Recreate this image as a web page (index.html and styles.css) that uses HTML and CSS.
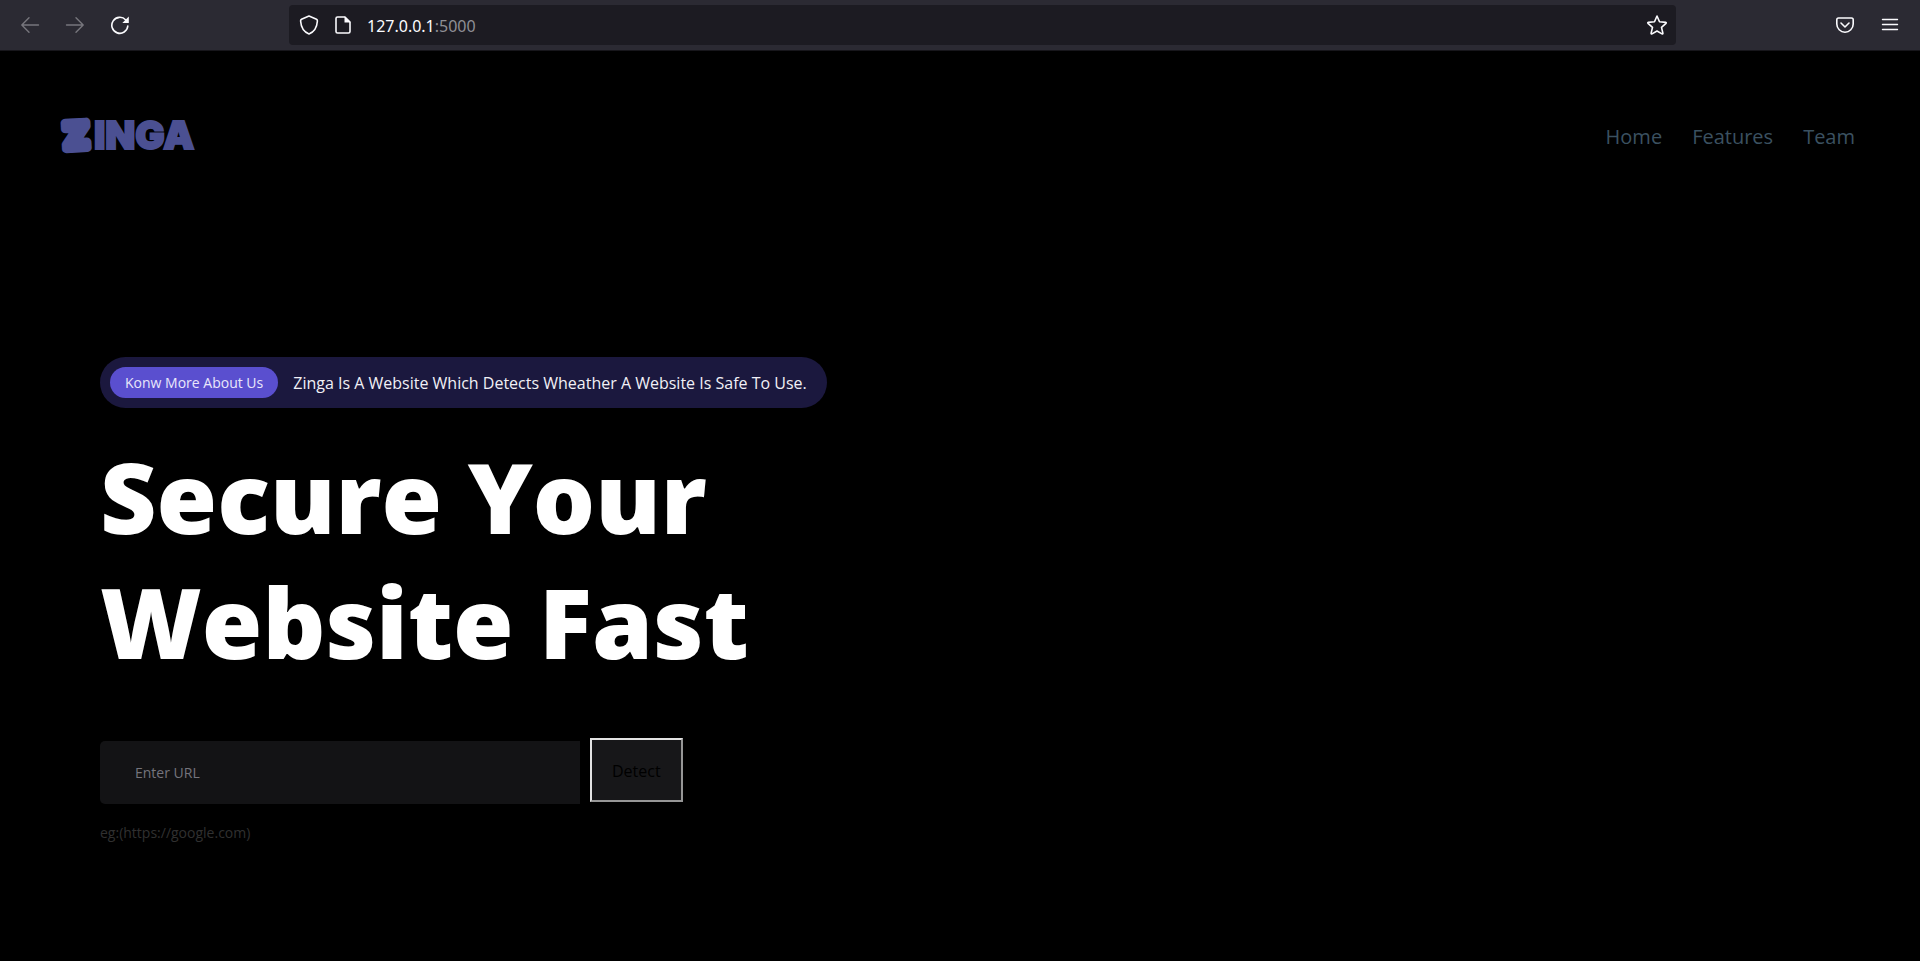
FILE: index.html
```html
<!DOCTYPE html>
<html lang="en">
<head>
<meta charset="utf-8">
<title>Zinga</title>
<link rel="stylesheet" href="styles.css">
</head>
<body>
<div class="toolbar">
  <div class="nav-buttons">
    <button class="tool dim" aria-label="Back"><svg viewBox="0 0 20 20"><path d="M18.5 10H2M9 2.800 1.800 10 9 17.200"/></svg></button>
    <button class="tool dim" aria-label="Forward"><svg viewBox="0 0 20 20"><path d="M1.500 10H18M11 2.800 18.200 10 11 17.200"/></svg></button>
    <button class="tool" aria-label="Reload"><svg viewBox="0 0 20 20"><path class="bold" d="M17.800 11A8 8 0 1 1 15.800 5"/><path class="fill" d="M18.800 1.500V8H12.300Z"/></svg></button>
  </div>
  <div class="address">
    <button class="tool" aria-label="Tracking protection"><svg viewBox="0 0 20 20"><path class="bold" d="M10 1 17.500 4.200Q18.500 4.700 18.400 6C18 12 15 17 10 19 5 17 2 12 1.600 6Q1.500 4.700 2.500 4.200Z"/></svg></button>
    <button class="tool" aria-label="Site information"><svg viewBox="0 0 20 20"><path class="bold" d="M4.500 2H12L17 7V16.500Q17 18 15.500 18H4.500Q3 18 3 16.500V3.500Q3 2 4.500 2Z"/><path class="fill" d="M11.500 1.500V7.500H17.500Z"/></svg></button>
    <span class="url"><span>127.0.0.1</span>:5000</span>
    <button class="tool" aria-label="Bookmark"><svg viewBox="0 0 20 20"><path class="bold" d="M10 1 12.500 6.800 18.900 7.400Q19.600 7.700 19 8.300L14.500 12.400 15.900 18.300Q15.800 19.300 15 18.900L10 16 5 18.900Q4.200 19.300 4.100 18.300L5.500 12.400 1 8.300Q.4 7.700 1.100 7.400L7.500 6.800Z"/></svg></button>
  </div>
  <div class="side-buttons">
    <button class="tool" aria-label="Pocket"><svg viewBox="0 0 20 20"><path class="bold" d="M3.500 3H16.500Q18.200 3 18.200 4.700V9A8.200 8.200 0 0 1 1.800 9V4.700Q1.800 3 3.500 3Z"/><path class="bold" d="M6 8 10 12 14 8"/></svg></button>
    <button class="tool" aria-label="Menu"><svg viewBox="0 0 20 20"><path d="M2.500 4.500H17.500M2.500 9.500H17.500M2.500 14.500H17.500"/></svg></button>
  </div>
</div>

<header class="header">
  <a class="logo" href="#" aria-label="Zinga">
    <svg viewBox="-5 -10 145 60"><text class="logo-z" x="4" y="31" transform="rotate(-3 17 18)">Z</text><text class="logo-rest" x="34" y="32">INGA</text></svg>
  </a>
  <nav class="menu">
    <a href="#">Home</a>
    <a href="#">Features</a>
    <a href="#">Team</a>
  </nav>
</header>

<main class="hero">
  <div class="notice">
    <a class="notice-link" href="#">Konw More About Us</a>
    <span class="notice-text">Zinga Is A Website Which Detects Wheather A Website Is Safe To Use.</span>
  </div>
  <h1>Secure Your<br>Website Fast</h1>
  <form class="detect">
    <input type="text" aria-label="URL" placeholder="Enter URL">
    <button type="button">Detect</button>
  </form>
  <p class="hint">eg:(https://google.com)</p>
</main>
</body>
</html>
```
FILE: styles.css
```css
* { box-sizing: border-box; }

body {
  margin: 0;
  min-height: 100vh;
  background: #000;
  color: #fff;
  font-family: "Open Sans", sans-serif;
}

a { text-decoration: none; }

.toolbar {
  display: flex;
  align-items: center;
  height: 51px;
  padding: 0 20px;
  background: #2b2a33;
  border-bottom: 1px solid #17161b;
}

.nav-buttons {
  display: flex;
  gap: 25px;
  width: 269px;
}

.side-buttons {
  display: flex;
  justify-content: flex-end;
  gap: 25px;
  width: 224px;
}

.tool {
  width: 20px;
  height: 20px;
  padding: 0;
  border: 0;
  background: none;
  color: #fbfbfe;
}

.tool svg {
  display: block;
  fill: none;
  stroke: currentColor;
  stroke-width: 1.4;
  stroke-linecap: round;
  stroke-linejoin: round;
}

.tool .bold { stroke-width: 1.6; }
.tool .fill { fill: currentColor; stroke: none; }
.tool.dim { color: #77767d; }

.address {
  display: flex;
  flex: 1;
  align-items: center;
  gap: 14px;
  height: 40px;
  padding: 0 9px 0 10px;
  border-radius: 4px;
  background: #1c1b22;
}

.url {
  flex: 1;
  padding-top: 2px;
  color: #8f8f95;
  font: 16px/24px "Noto Sans", sans-serif;
}

.url span { color: #fbfbfe; }

.header {
  display: flex;
  align-items: center;
  justify-content: space-between;
  padding: 56px 65px 0 55px;
}

.logo svg {
  display: block;
  width: 145px;
  height: 60px;
  fill: #4b5092;
}

.logo-z {
  font: 900 35px Inter, sans-serif;
  stroke: #4b5092;
  stroke-width: 9px;
  stroke-linejoin: round;
}

.logo-rest {
  font: 900 39px Inter, sans-serif;
  stroke: #4b5092;
  stroke-width: 2px;
}

.menu {
  display: flex;
  gap: 30px;
  font-size: 20px;
  line-height: 30px;
}

.menu a { color: #3b5160; }

.hero { padding: 190px 100px 0; }

.notice {
  display: inline-flex;
  align-items: center;
  gap: 15px;
  padding: 10px 20px 10px 10px;
  border-radius: 26px;
  background: #1b183e;
}

.notice-link {
  padding: 0 15px;
  border-radius: 16px;
  background: #5a4fcf;
  color: #e9e7fb;
  font-size: 14px;
  line-height: 31px;
}

.notice-text {
  color: #f1f0f6;
  font-size: 16px;
  line-height: 24px;
}

h1 {
  margin: 26px 0 0;
  font-size: 98px;
  font-weight: 800;
  line-height: 125px;
}

.detect {
  display: flex;
  align-items: flex-start;
  gap: 10px;
  padding-top: 54px;
}

.detect input {
  width: 480px;
  height: 63px;
  margin-top: 3px;
  padding: 0 35px;
  border: 0;
  border-radius: 5px 0 0 5px;
  background: #131315;
  color: #fff;
  font: 14px "Open Sans", sans-serif;
}

.detect input::placeholder { color: #75747c; }

.detect button {
  height: 64px;
  padding: 2px 20px 0;
  border: 2px solid;
  border-color: #e3e3e3 #969696 #969696 #e3e3e3;
  background: #171719;
  color: #000;
  font: 16px "Open Sans", sans-serif;
}

.hint {
  margin: 19px 0 0;
  color: #303030;
  font-size: 14px;
  line-height: 20px;
}
```
